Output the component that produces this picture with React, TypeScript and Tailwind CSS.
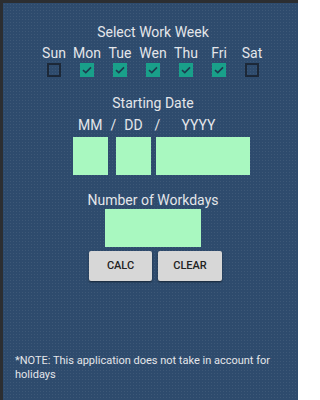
const days = [
  { label: 'Sun', checked: false },
  { label: 'Mon', checked: true },
  { label: 'Tue', checked: true },
  { label: 'Wen', checked: true },
  { label: 'Thu', checked: true },
  { label: 'Fri', checked: true },
  { label: 'Sat', checked: false },
]

function Box({ checked }: { checked: boolean }) {
  if (!checked) {
    return <div className="w-[14px] h-[14px] border-2 border-[#1c2838]" />
  }
  return (
    <div className="w-[14px] h-[14px] bg-[#19a08a] flex items-center justify-center">
      <svg width="10" height="8" viewBox="0 0 10 8" aria-hidden="true">
        <polyline points="1,4.2 3.8,6.6 9,1.4" fill="none" stroke="#1d3a4e" strokeWidth="1.6" />
      </svg>
    </div>
  )
}

export default function App() {
  return (
    <div className="w-[298px] h-[400px] bg-[#2c2e31] pt-[3px] pl-[3px] overflow-hidden">
      <div
        className="h-full flex flex-col bg-[#2e4b6d] bg-[radial-gradient(rgba(255,255,255,0.07)_1px,transparent_1px)] bg-[size:3px_3px] text-[#e4e6ea] font-['Roboto',sans-serif]"
      >
        <div className="flex flex-col items-center pl-[5px]">
          {/* work week */}
          <p className="mt-[21px] text-[14px] leading-[16px]">Select Work Week</p>
          <div className="grid grid-cols-7 w-[231px] mt-[5px]">
            {days.map((d) => (
              <div key={d.label} className="flex flex-col items-center">
                <span className="text-[14px] leading-[16px]">{d.label}</span>
                <div className="mt-[2px]">
                  <Box checked={d.checked} />
                </div>
              </div>
            ))}
          </div>

          {/* starting date */}
          <p className="mt-[18px] text-[14px] leading-[16px]">Starting Date</p>
          <div className="w-[177px] ml-[17px] mt-[6px] flex text-[14px] leading-[16px]">
            <span className="ml-[5px]">MM</span>
            <span className="ml-[8px]">/</span>
            <span className="ml-[8px]">DD</span>
            <span className="ml-[12px]">/</span>
            <span className="ml-[21px]">YYYY</span>
          </div>
          <div className="w-[177px] ml-[17px] mt-[4px] flex">
            <div className="w-[35px] h-[38px] bg-[#a9f8c0]" />
            <div className="w-[35px] h-[38px] bg-[#a9f8c0] ml-[8px]" />
            <div className="w-[94px] h-[38px] bg-[#a9f8c0] ml-[5px]" />
          </div>

          {/* result */}
          <p className="mt-[17px] text-[14px] leading-[16px]">Number of Workdays</p>
          <div className="w-[96px] h-[38px] bg-[#a9f8c0] mt-[1px]" />

          <div className="flex gap-[6px] mt-[4px] ml-[5px]">
            <button className="w-[63px] h-[30px] bg-[#d7d7d7] rounded-[2px] shadow-[0_1px_2px_rgba(0,0,0,0.5)] text-[11px] font-medium text-[#222]">
              CALC
            </button>
            <button className="w-[64px] h-[30px] bg-[#d7d7d7] rounded-[2px] shadow-[0_1px_2px_rgba(0,0,0,0.5)] text-[11px] font-medium text-[#222]">
              CLEAR
            </button>
          </div>
        </div>

        {/* note */}
        <p className="mt-[73px] pl-[12px] pr-[20px] text-[11px] leading-[14px]">
          *NOTE: This application does not take in account for holidays
        </p>
      </div>
    </div>
  )
}
